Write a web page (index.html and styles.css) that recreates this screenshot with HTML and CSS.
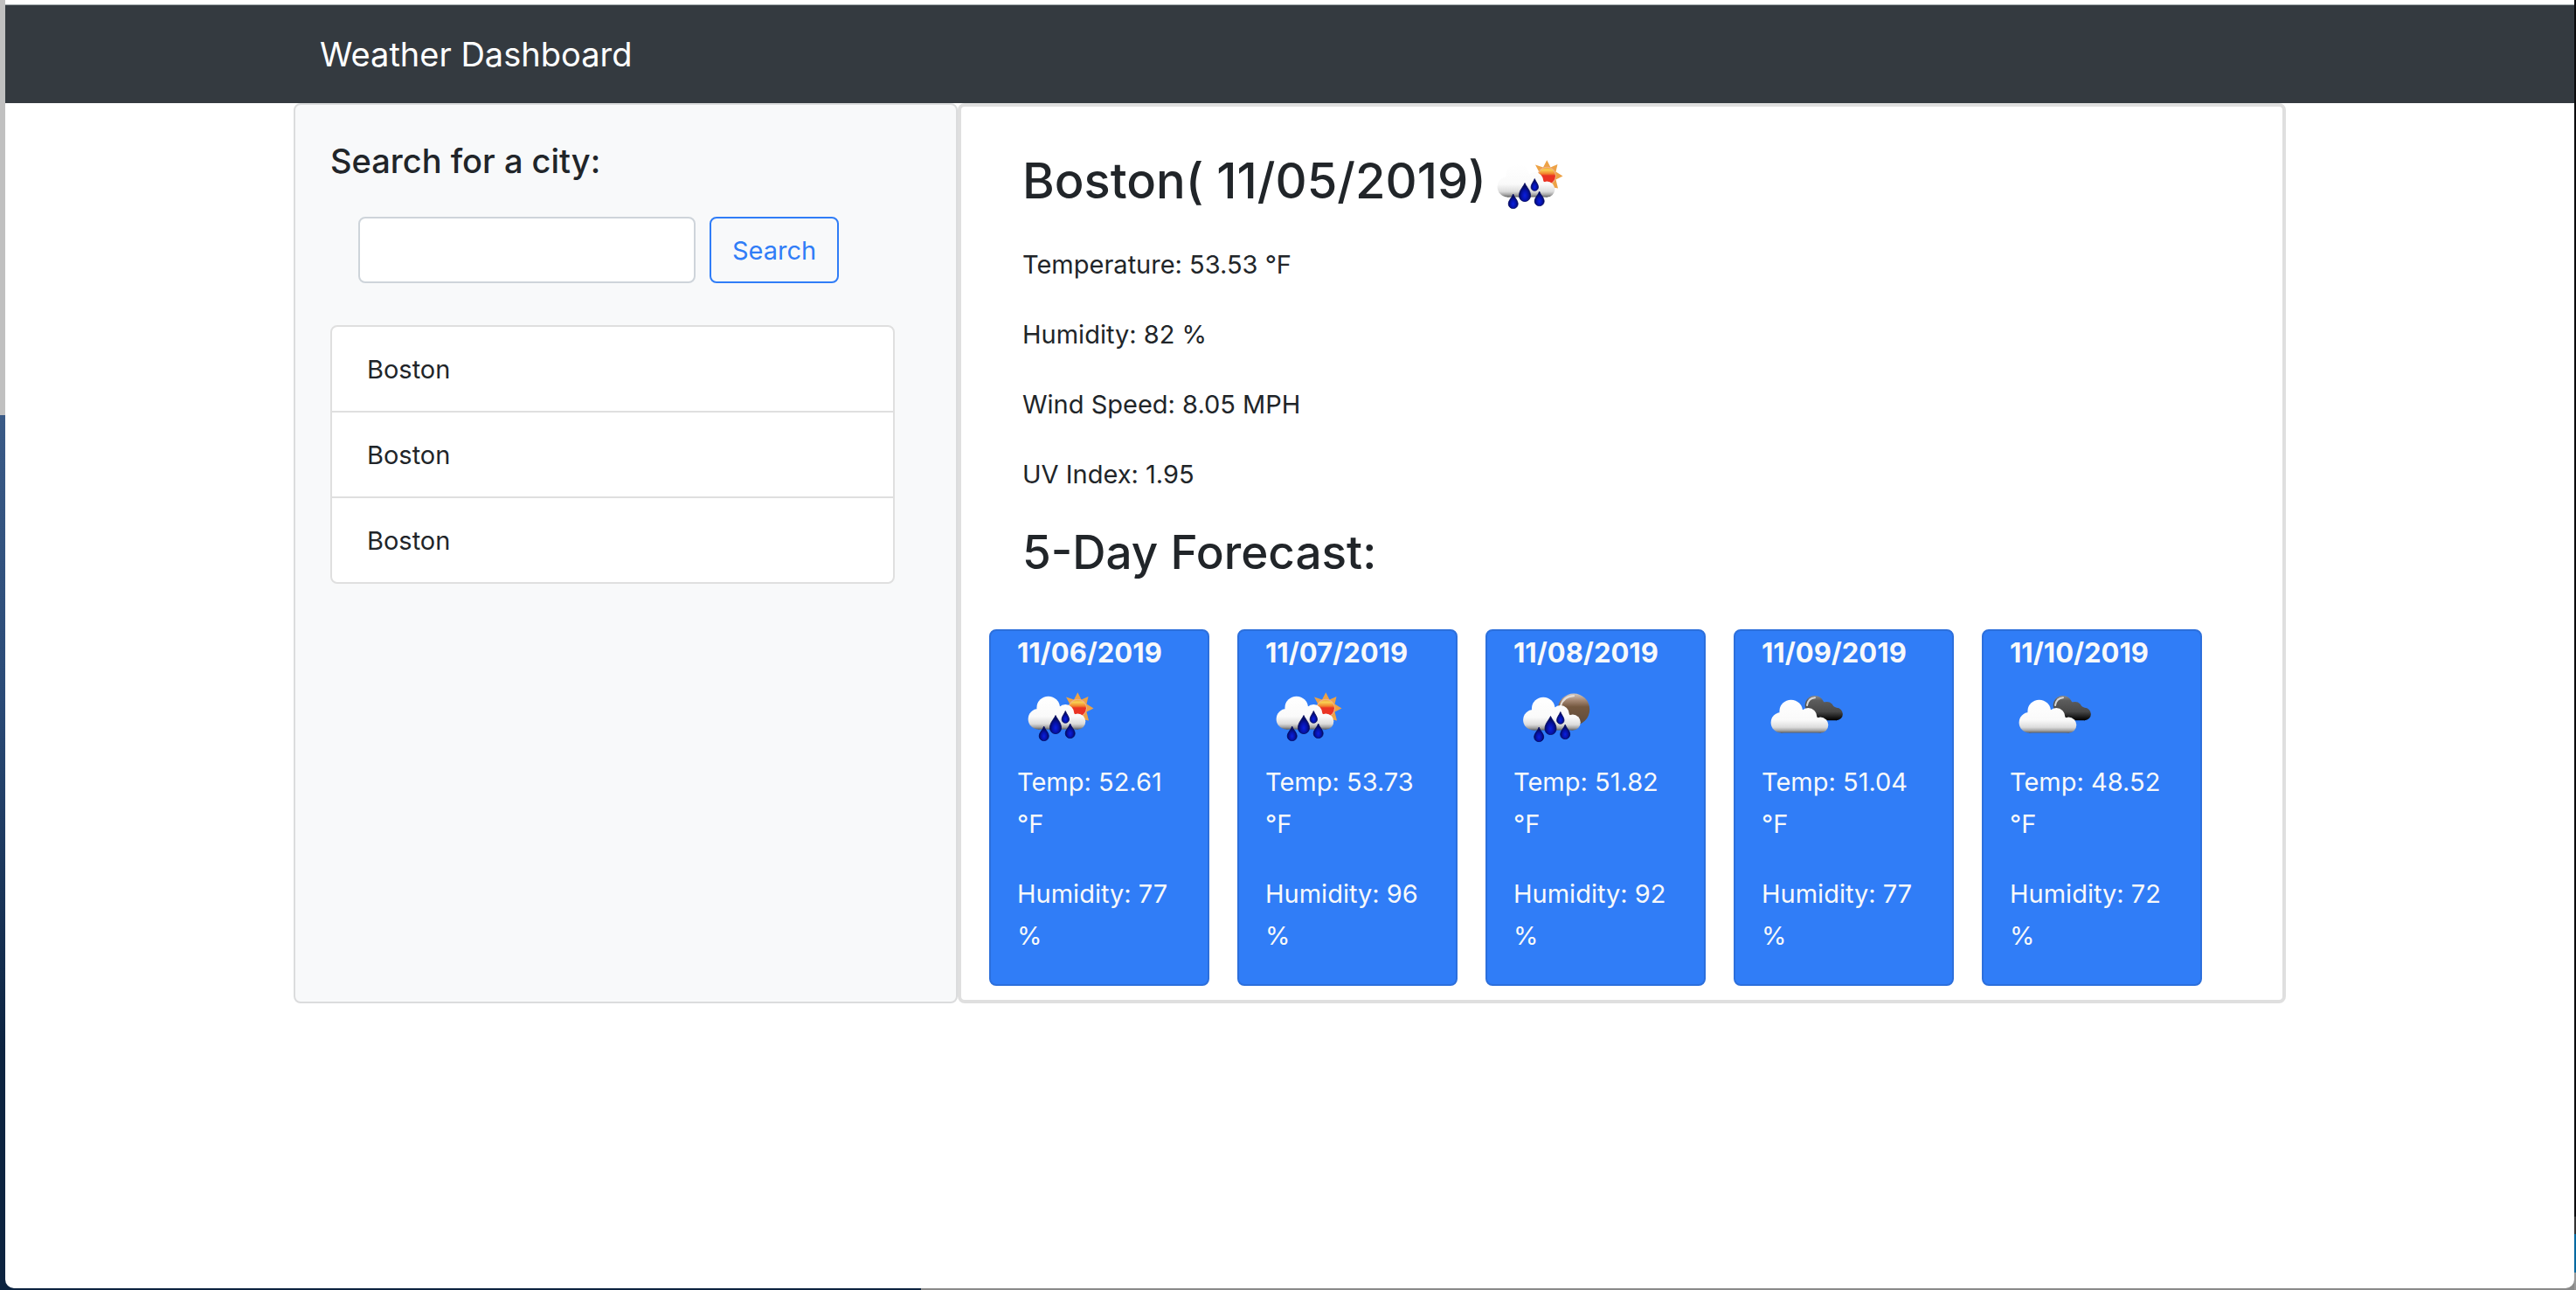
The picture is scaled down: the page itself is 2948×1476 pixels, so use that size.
FILE: index.html
```html
<!DOCTYPE html>
<html lang="en">
<head>
<meta charset="utf-8">
<meta name="viewport" content="width=device-width, initial-scale=1">
<title>Weather Dashboard</title>
<link rel="stylesheet" href="styles.css">
</head>
<body>
<svg class="defs" width="0" height="0" aria-hidden="true">
  <defs>
    <linearGradient id="cloud" gradientUnits="userSpaceOnUse" x1="0" y1="26" x2="0" y2="64">
      <stop offset="0" stop-color="#fff"/><stop offset=".6" stop-color="#fafafa"/><stop offset=".82" stop-color="#dcdcdc"/><stop offset=".92" stop-color="#a4a4a4"/><stop offset="1" stop-color="#555"/>
    </linearGradient>
    <linearGradient id="sun" x1="0" y1="0" x2="0" y2="1">
      <stop offset="0" stop-color="#f3a63c"/><stop offset=".15" stop-color="#f8cf52"/><stop offset=".38" stop-color="#f2802c"/><stop offset=".48" stop-color="#ea3323"/><stop offset="1" stop-color="#ea3323"/>
    </linearGradient>
    <linearGradient id="moon" x1="0" y1="0" x2="0" y2="1">
      <stop offset="0" stop-color="#d3c8c0"/><stop offset=".2" stop-color="#a98c78"/><stop offset=".42" stop-color="#74583f"/><stop offset="1" stop-color="#5e4b3c"/>
    </linearGradient>
    <linearGradient id="dark" gradientUnits="userSpaceOnUse" x1="0" y1="25" x2="0" y2="53">
      <stop offset="0" stop-color="#8a8a8a"/><stop offset=".2" stop-color="#5c5c5c"/><stop offset=".65" stop-color="#484848"/><stop offset="1" stop-color="#000"/>
    </linearGradient>
    <radialGradient id="drop" cx=".5" cy=".68" r=".5">
      <stop offset="0" stop-color="#0a1fe0"/><stop offset=".55" stop-color="#0512a8"/><stop offset="1" stop-color="#040a60"/>
    </radialGradient>
    <g id="front" fill="url(#cloud)">
      <circle cx="24.3" cy="51.8" r="11.7"/><circle cx="35.7" cy="39" r="13.3"/><circle cx="55.3" cy="45" r="10"/><circle cx="69.3" cy="54.6" r="9"/><path d="M24 42L44 36L60 40L70 50V63.5H24Z"/>
    </g>
    <g id="drops" fill="url(#drop)" stroke="#040a60" stroke-width=".8">
      <path d="M44 47.5C46 52 50.5 56 50.5 61.5C50.5 66 47.6 68.5 44 68.5S37.5 66 37.5 61.5C37.5 56 42 52 44 47.5Z"/>
      <path d="M55.3 42.5C56.5 46 59.5 48.7 59.5 52C59.5 54.6 57.6 56.3 55.3 56.3S51.1 54.6 51.1 52C51.1 48.7 54 46 55.3 42.5Z"/>
      <path d="M30.7 60C32 64 36.2 67.3 36.2 71C36.2 74.5 33.8 76.6 30.7 76.6S25.2 74.5 25.2 71C25.2 67.3 29.4 64 30.7 60Z"/>
      <path d="M60.7 57C62 61 66.2 64.3 66.2 68C66.2 71.5 63.8 73.6 60.7 73.6S55.2 71.5 55.2 68C55.2 64.3 59.4 61 60.7 57Z"/>
    </g>
    <symbol id="rain-day" viewBox="0 0 100 100">
      <path fill="#eda246" d="M69.3 21.3L73.5 29.5L81.5 26L79.5 34.5L87.5 39.5L79.5 43.5L82 53.5L69 51L58 40L60 34L56 26.5L65 29.5Z"/>
      <circle cx="69.3" cy="39.3" r="10.6" fill="#f0b08a"/><circle cx="69.3" cy="39.3" r="9.6" fill="url(#sun)"/>
      <use href="#front"/><use href="#drops"/>
    </symbol>
    <symbol id="rain-night" viewBox="0 0 100 100">
      <circle cx="69" cy="40.7" r="18.2" fill="url(#moon)"/>
      <path d="M54 37C56 29 62 25.6 69 25.2" fill="none" stroke="#e3dcd6" stroke-width="2.2" stroke-linecap="round"/>
      <g transform="translate(-1.5 1)"><use href="#front"/><use href="#drops"/></g>
    </symbol>
    <symbol id="clouds" viewBox="0 0 100 100">
      <g fill="url(#dark)"><circle cx="60.7" cy="36" r="11"/><circle cx="74.7" cy="40.3" r="8.3"/><circle cx="85.7" cy="46" r="7.2"/><path d="M60 30L74 33L86 39V53.2H60Z"/></g>
      <path d="M52 36C53 30 57 27.4 61 27.2" fill="none" stroke="#d8d8d8" stroke-width="2" stroke-linecap="round"/>
      <use href="#front" transform="translate(-2 4)"/>
    </symbol>
  </defs>
</svg>
<div class="window">
  <header class="navbar"><div class="container"><a class="brand" href="#">Weather Dashboard</a></div></header>
  <main class="container dashboard">
    <aside class="sidebar">
      <h2 class="sidebar-title"><label for="city">Search for a city:</label></h2>
      <form class="search">
        <input class="search-input" id="city" type="text">
        <button class="search-button" type="button">Search</button>
      </form>
      <ul class="history">
        <li>Boston</li>
        <li>Boston</li>
        <li>Boston</li>
      </ul>
    </aside>
    <section class="weather">
      <div class="current">
        <h1 class="city">Boston( 11/05/2019)<svg class="icon"><use href="#rain-day"/></svg></h1>
        <p>Temperature: 53.53 °F</p>
        <p>Humidity: 82 %</p>
        <p>Wind Speed: 8.05 MPH</p>
        <p>UV Index: 1.95</p>
        <h2 class="forecast-title">5-Day Forecast:</h2>
      </div>
      <div class="forecast">
        <article class="day"><h3>11/06/2019</h3><svg class="icon"><use href="#rain-day"/></svg><p>Temp: 52.61 °F</p><p>Humidity: 77 %</p></article>
        <article class="day"><h3>11/07/2019</h3><svg class="icon"><use href="#rain-day"/></svg><p>Temp: 53.73 °F</p><p>Humidity: 96 %</p></article>
        <article class="day"><h3>11/08/2019</h3><svg class="icon"><use href="#rain-night"/></svg><p>Temp: 51.82 °F</p><p>Humidity: 92 %</p></article>
        <article class="day"><h3>11/09/2019</h3><svg class="icon"><use href="#clouds"/></svg><p>Temp: 51.04 °F</p><p>Humidity: 77 %</p></article>
        <article class="day"><h3>11/10/2019</h3><svg class="icon"><use href="#clouds"/></svg><p>Temp: 48.52 °F</p><p>Humidity: 72 %</p></article>
      </div>
    </section>
  </main>
</div>
</body>
</html>
```
FILE: styles.css
```css
*, *::before, *::after { box-sizing: border-box; }

/* Desktop showing round the edges of the window */
body {
  margin: 0;
  padding: 0 2px 2px 6px;
  font: 400 29px/48px Inter, "Liberation Sans", sans-serif;
  color: #212529;
  background:
    linear-gradient(#c0c0c0 475px, #3a5a86 475px, #2a4a76 800px, #0c2340 1200px, #0c2340) left top / 16px calc(100% - 16px) no-repeat,
    linear-gradient(#0b0b0d 1392px, #333 1392px, #333 1412px, #0069a0 1412px, #0069a0 1456px, #999 1456px) right top / 2px 100% no-repeat,
    linear-gradient(90deg, #0c2340 1054px, #8a8a8a 1054px) left bottom / 100% 16px no-repeat,
    #fff;
}

h1, h2, h3, p, ul { margin: 0; padding: 0; }

.defs { display: block; }

.window {
  min-height: calc(100vh - 2px);
  padding-top: 5px;
  background: #fff;
  border-radius: 0 0 10px 10px;
}

.container {
  width: 100%;
  max-width: 2280px;
  margin: 0 auto;
}

.navbar {
  padding: 26px 0;
  background: #343a40;
  border-top: 1px solid #9aa3a6;
}

.brand {
  display: block;
  margin-left: 30px;
  font-size: 38px;
  line-height: 60px;
  color: #fff;
  text-decoration: none;
}

.dashboard {
  display: grid;
  grid-template-columns: 1fr 2fr;
}

.sidebar {
  padding: 40px;
  background: #f8f9fa;
  border: 2px solid #dbdcdd;
  border-radius: 8px;
}

.sidebar-title {
  font-size: 38px;
  line-height: 48px;
  font-weight: 500;
}

.search {
  display: flex;
  gap: 16px;
  padding: 40px 32px 48px;
}

.search-input {
  flex: 0 1 386px;
  min-width: 0;
  height: 76px;
  padding: 12px 24px;
  font: inherit;
  color: #495057;
  background: #fff;
  border: 2px solid #ced4da;
  border-radius: 8px;
}

.search-button {
  height: 76px;
  padding: 2px 24px 0;
  font: inherit;
  color: #307df7;
  background: transparent;
  border: 2px solid #307df7;
  border-radius: 8px;
}

.history {
  margin-right: 30px;
  list-style: none;
  background: #fff;
  border: 2px solid #dfdfdf;
  border-radius: 8px;
}

.history li { padding: 25px 40px 23px; }
.history li + li { border-top: 2px solid #dfdfdf; }

.weather {
  padding: 40px 32px 16px;
  border: 4px solid #dfdfdf;
  border-radius: 8px;
}

.current { padding: 0 38px 38px; }
.current p { margin-bottom: 32px; }

.city {
  margin-bottom: 17px;
  font-size: 56px;
  line-height: 67px;
  font-weight: 500;
}

.forecast-title {
  padding-bottom: 16px;
  font-size: 53px;
  line-height: 67px;
  font-weight: 500;
}

.icon {
  display: inline-block;
  width: 100px;
  height: 100px;
  vertical-align: middle;
}

.forecast {
  display: grid;
  grid-template-columns: repeat(auto-fill, 252px);
  gap: 32px;
}

.day {
  padding: 1px 30px 0;
  color: #f8f9fa;
  background: #307df7;
  border: 2px solid #2c6fdc;
  border-radius: 8px;
}

.day h3 {
  font-size: 31px;
  line-height: 48px;
  font-weight: 700;
}

.day .icon { display: block; }
.day p { margin-bottom: 32px; }
.day p:last-child { margin-bottom: 31px; }
```
